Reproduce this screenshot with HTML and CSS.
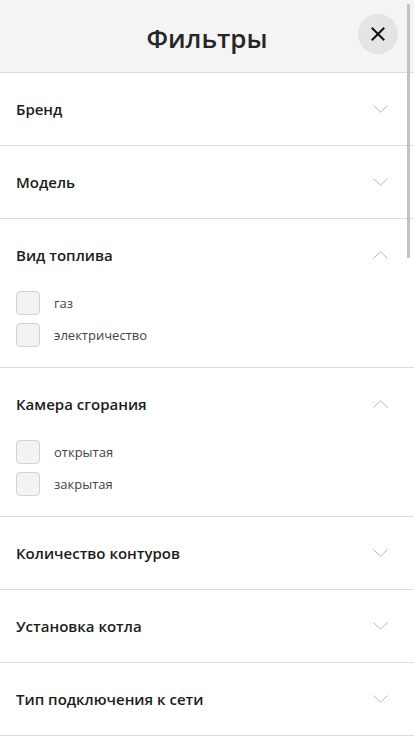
FILE: index.html
```html
<!DOCTYPE html>
<html lang="ru">
<head>
<meta charset="utf-8">
<title>Фильтры</title>
<link rel="stylesheet" href="styles.css">
</head>
<body>
<div class="panel">
  <header class="header">
    <h1 class="title">Фильтры</h1>
    <button class="close" aria-label="Закрыть">
      <svg width="14" height="14" viewBox="0 0 14 14"><path d="M1.5 1.5L12.5 12.5M12.5 1.5L1.5 12.5" stroke="#111" stroke-width="2" fill="none" stroke-linecap="square"/></svg>
    </button>
  </header>
  <div class="list">
    <section class="group">
      <div class="group-head"><span class="group-name">Бренд</span><svg class="chev" width="15" height="8" viewBox="0 0 15 8"><path d="M0.5 0.5L7.5 7.2L14.5 0.5" stroke="#b5b5b5" fill="none"/></svg></div>
    </section>
    <section class="group">
      <div class="group-head"><span class="group-name">Модель</span><svg class="chev" width="15" height="8" viewBox="0 0 15 8"><path d="M0.5 0.5L7.5 7.2L14.5 0.5" stroke="#b5b5b5" fill="none"/></svg></div>
    </section>
    <section class="group open">
      <div class="group-head"><span class="group-name">Вид топлива</span><svg class="chev" width="15" height="8" viewBox="0 0 15 8"><path d="M0.5 7.5L7.5 0.8L14.5 7.5" stroke="#b5b5b5" fill="none"/></svg></div>
      <ul class="options">
        <li class="option"><span class="box"></span><span class="label">газ</span></li>
        <li class="option"><span class="box"></span><span class="label">электричество</span></li>
      </ul>
    </section>
    <section class="group open">
      <div class="group-head"><span class="group-name">Камера сгорания</span><svg class="chev" width="15" height="8" viewBox="0 0 15 8"><path d="M0.5 7.5L7.5 0.8L14.5 7.5" stroke="#b5b5b5" fill="none"/></svg></div>
      <ul class="options">
        <li class="option"><span class="box"></span><span class="label">открытая</span></li>
        <li class="option"><span class="box"></span><span class="label">закрытая</span></li>
      </ul>
    </section>
    <section class="group">
      <div class="group-head"><span class="group-name">Количество контуров</span><svg class="chev" width="15" height="8" viewBox="0 0 15 8"><path d="M0.5 0.5L7.5 7.2L14.5 0.5" stroke="#b5b5b5" fill="none"/></svg></div>
    </section>
    <section class="group">
      <div class="group-head"><span class="group-name">Установка котла</span><svg class="chev" width="15" height="8" viewBox="0 0 15 8"><path d="M0.5 0.5L7.5 7.2L14.5 0.5" stroke="#b5b5b5" fill="none"/></svg></div>
    </section>
    <section class="group">
      <div class="group-head"><span class="group-name">Тип подключения к сети</span><svg class="chev" width="15" height="8" viewBox="0 0 15 8"><path d="M0.5 0.5L7.5 7.2L14.5 0.5" stroke="#b5b5b5" fill="none"/></svg></div>
    </section>
  </div>
  <div class="scrollbar"></div>
</div>
</body>
</html>
```
FILE: styles.css
```css
* { box-sizing: border-box; }
html, body { margin: 0; padding: 0; }
body {
  font-family: "Open Sans", "Noto Sans", sans-serif;
  background: #fff;
  color: #1f1f1f;
  width: 414px;
  height: 736px;
  overflow: hidden;
}
.panel { position: relative; height: 736px; }
.header {
  height: 73px;
  background: #f4f4f4;
  border-bottom: 1px solid #dcdcdc;
  display: flex;
  align-items: center;
  justify-content: center;
  position: relative;
}
.title {
  margin: 0;
  font-size: 26px;
  font-weight: 600;
  color: #262626;
  line-height: 1;
  padding-top: 4px;
}
.close {
  position: absolute;
  right: 16px;
  top: 14px;
  width: 40px;
  height: 40px;
  border-radius: 50%;
  border: none;
  background: #e4e4e4;
  display: flex;
  align-items: center;
  justify-content: center;
  padding: 0;
}
.list { display: flex; flex-direction: column; }
.group { border-bottom: 1px solid #dcdcdc; }
.group-head {
  height: 72px;
  display: flex;
  align-items: center;
  justify-content: space-between;
  padding: 0 26px 0 16px;
}
.group-name {
  font-size: 15px;
  font-weight: 600;
  color: #1c1c1c;
}
.chev { display: block; }
.options {
  list-style: none;
  margin: 0;
  padding: 0 16px 20px;
  display: flex;
  flex-direction: column;
  gap: 8px;
}
.option { display: flex; align-items: center; gap: 14px; height: 24px; }
.box {
  width: 24px;
  height: 24px;
  border: 1px solid #d3d3d3;
  border-radius: 4px;
  background: #f3f3f3;
  flex: none;
}
.label { font-size: 13px; color: #444; }
.scrollbar {
  position: absolute;
  top: 4px;
  left: 407px;
  width: 3px;
  height: 254px;
  background: #c2c2c2;
  border-radius: 1px;
}
```
